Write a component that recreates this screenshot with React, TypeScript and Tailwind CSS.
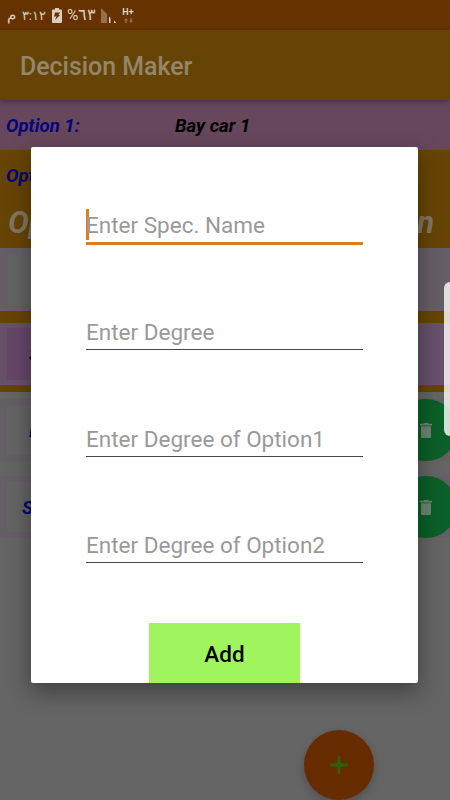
import type { ReactNode } from "react";

const fields = ["Enter Degree", "Enter Degree of Option1", "Enter Degree of Option2"];

function StatusBar() {
	return (
		<div className="h-[30px] bg-[#663300] flex items-center pl-2 text-[#dccdbf] leading-none whitespace-nowrap">
			<div dir="rtl" className="w-[38px] flex items-center justify-between text-[15px]">
				<span className="text-[13px]">٣:١٢</span>
				<span className="-ml-px">م</span>
			</div>
			<svg viewBox="0 0 10 15" className="w-[10px] h-[15px] ml-[6px]" fill="currentColor">
				<path d="M3 0h4v1.500h2a1 1 0 0 1 1 1V14a1 1 0 0 1-1 1H1a1 1 0 0 1-1-1V2.500a1 1 0 0 1 1-1h2z" />
				<path d="M3 4.500h5L6.500 7H8l-5 5 1.500-3.500H2z" fill="#663300" />
			</svg>
			<span className="w-[29px] ml-[5px] pt-px text-[15.500px]">%٦٣</span>
			<svg viewBox="0 0 16 15" className="w-4 h-[15px] ml-[5px]">
				<path d="M0 0l6 6v9H0z" fill="#94704d" />
				<path d="M8 8.500l1.500 1.500v5H8zM13 12.500l2 2v.5h-2z" fill="currentColor" />
			</svg>
			<div className="flex flex-col items-center ml-[5px] w-[12px]">
				<span className="text-[9px] leading-[9px] font-bold">H+</span>
				<svg viewBox="0 0 9 5" className="w-[9px] h-[5px] mt-px" fill="#94704d">
					<path d="M0 2.500L2 0l2 2.500H2.700V5H1.300V2.500zM5 2.500h1.300V0h1.400v2.500H9L7 5z" />
				</svg>
			</div>
		</div>
	);
}

function OptionRow({ label, value, className }: { label: string; value: string; className: string }) {
	return (
		<div className={`h-[50px] flex items-center pl-[6px] pt-[3px] text-[18.600px] font-bold italic ${className}`}>
			<span className="w-[169px] text-[#050578]">{label}</span>
			<span className="text-black">{value}</span>
		</div>
	);
}

function SpecRow({ children }: { children: ReactNode }) {
	return (
		<div className="h-[62px] flex items-center pl-[7px] bg-[#645f64]">
			<div className="w-[402px] h-[50px] pt-[3px] shrink-0 flex items-center bg-[#636463] text-[18.600px] font-bold italic text-[#050578]">
				{children}
			</div>
			<div className="w-[62px] h-[62px] ml-[-14px] shrink-0 rounded-full bg-[#0b5f28] flex items-center justify-center">
				<svg viewBox="0 0 12 15" className="w-3 h-[15px]" fill="#6c8370">
					<path d="M4 0h4l.7.800H12v1.700H0V.800h3.300zM1 3.300h10V14a1 1 0 0 1-1 1H2a1 1 0 0 1-1-1z" />
				</svg>
			</div>
		</div>
	);
}

function AddDialog() {
	return (
		<div className="absolute left-[31px] top-[147px] w-[387px] h-[536px] rounded-[2px] bg-white shadow-[0_8px_22px_1px_rgba(0,0,0,0.35)] overflow-hidden flex flex-col items-center">
			<div className="w-[277px] h-[98px] shrink-0 border-b-[3px] border-[#d87f20] flex items-end">
				<div className="relative h-[39px] flex items-center text-[22.500px] text-[#999]">
					<span className="absolute left-0 top-[6px] w-[3px] h-[31px] bg-[#d87f20]" />
					<span className="relative pt-[7px]">Enter Spec. Name</span>
				</div>
			</div>
			<div className="-mt-[2px] flex flex-col">
				{fields.map((field) => (
					<div
						key={field}
						className="w-[277px] h-[106.800px] shrink-0 border-b border-[#4a474a] flex items-end pb-[4px] text-[22.500px] leading-[26px] text-[#999]"
					>
						{field}
					</div>
				))}
			</div>
			<button className="w-[151px] h-[62px] mt-[60px] pt-px shrink-0 bg-[#a0f55f] text-black text-[22.500px] font-medium">
				Add
			</button>
		</div>
	);
}

export default function App() {
	return (
		<main className="relative w-[450px] h-[800px] overflow-hidden bg-[#646464] font-['Roboto',sans-serif]">
			<StatusBar />
			<header className="relative h-[70px] bg-[#664405] flex items-center pl-5 pt-[3px] text-[24.900px] font-medium text-[#94866b] shadow-[0_2px_5px_rgba(0,0,0,0.3)]">
				Decision Maker
			</header>

			{/* Options */}
			<OptionRow label="Option 1:" value="Bay car 1" className="bg-[#66475c]" />
			<OptionRow label="Option 2:" value="Bay car 2" className="bg-[#664405]" />
			<div className="h-[48px] bg-[#664405] flex items-center justify-between pl-2 pr-4 pb-px text-[31px] font-bold italic text-[#817660]">
				<span>Option</span>
				<span>Option</span>
			</div>

			{/* Table head */}
			<div className="h-[63px] bg-[#665e65] flex items-center pl-[7px]">
				<div className="w-[402px] h-[50px] bg-[#626362]" />
			</div>
			<div className="h-3 bg-[#664405]" />
			<div className="h-[62px] bg-[#66506a] flex items-center pl-[7px]">
				<div className="w-[402px] h-[52px] pt-[3px] flex items-center pl-[22px] bg-[#66476a] text-[18.600px] font-bold italic text-black">
					Spec
				</div>
			</div>
			<div className="h-[7px] bg-[#664405]" />

			{/* Specs */}
			<div className="pt-[7px] flex flex-col gap-[15px]">
				<SpecRow>
					<span className="pl-[22px]">Price</span>
				</SpecRow>
				<SpecRow>
					<span className="pl-[15px]">Speed</span>
				</SpecRow>
			</div>

			<button className="absolute left-[304px] top-[730px] w-[70px] h-[70px] rounded-full bg-[#662c00] shadow-[0_4px_8px_rgba(0,0,0,0.2)] flex items-center justify-center">
				<svg viewBox="0 0 18 18" className="w-[18px] h-[18px] -ml-px" fill="#305f05">
					<path d="M8 0h2l.8 7 7.200.8v2.400l-7.200.8-.8 7H8l-.8-7L0 10.200V7.800L7.200 7z" />
				</svg>
			</button>

			<AddDialog />

			{/* Edge panel handle */}
			<div className="absolute right-0 top-[282px] w-[6px] h-[154px] rounded-l-[6px] bg-white/80" />
		</main>
	);
}
